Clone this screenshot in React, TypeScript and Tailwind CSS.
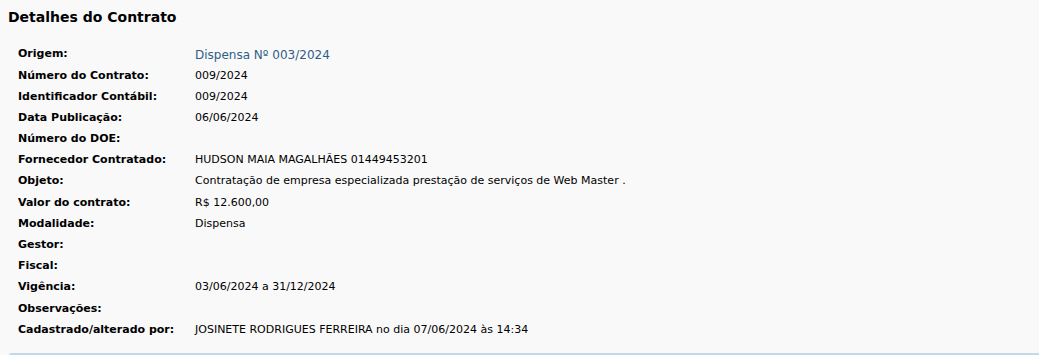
const rows: { label: string; value?: string; link?: boolean }[] = [
  { label: "Origem:", value: "Dispensa Nº 003/2024", link: true },
  { label: "Número do Contrato:", value: "009/2024" },
  { label: "Identificador Contábil:", value: "009/2024" },
  { label: "Data Publicação:", value: "06/06/2024" },
  { label: "Número do DOE:" },
  { label: "Fornecedor Contratado:", value: "HUDSON MAIA MAGALHÃES 01449453201" },
  { label: "Objeto:", value: "Contratação de empresa especializada prestação de serviços de Web Master ." },
  { label: "Valor do contrato:", value: "R$ 12.600,00" },
  { label: "Modalidade:", value: "Dispensa" },
  { label: "Gestor:" },
  { label: "Fiscal:" },
  { label: "Vigência:", value: "03/06/2024 a 31/12/2024" },
  { label: "Observações:" },
  { label: "Cadastrado/alterado por:", value: "JOSINETE RODRIGUES FERREIRA no dia 07/06/2024 às 14:34" },
];

export default function App() {
  return (
    <div className="h-[355px] w-[1039px] overflow-hidden bg-white font-['DejaVu_Sans',Verdana,sans-serif] text-black">
      <div className="flex h-full flex-col rounded-tl-[3px] bg-[#f9f9f9]">
        {/* Cabeçalho */}
        <h2 className="pl-2 pt-[9px] text-[14px] font-bold leading-4">Detalhes do Contrato</h2>

        {/* Tabela de detalhes */}
        <div className="mt-[19px] flex flex-col pl-[18px]">
          {rows.map((r) => (
            <div key={r.label} className="flex h-[21.2px] items-center">
              <div className="w-[177px] shrink-0 text-[11px] font-bold">{r.label}</div>
              {r.value && (
                <div
                  className={
                    r.link
                      ? "text-[12px] text-[#2f5d88]"
                      : "text-[11px]"
                  }
                >
                  {r.value}
                </div>
              )}
            </div>
          ))}
        </div>

        <div className="mt-auto ml-[9px] h-[2px] rounded-tl-[3px] bg-[#c4d8e8]" />
      </div>
    </div>
  );
}
